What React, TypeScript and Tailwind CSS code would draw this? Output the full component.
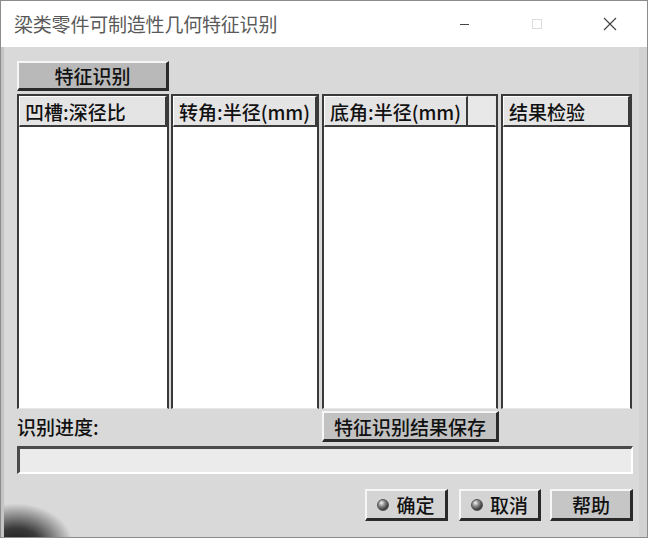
import React from 'react';

const font = { fontFamily: '"Noto Sans CJK SC", "Noto Sans", sans-serif' };

const Ball: React.FC = () => (
  <span className="inline-block w-[12px] h-[12px] rounded-full bg-[radial-gradient(circle_at_35%_30%,#f4f4f4_0%,#8a8a8a_35%,#2a2a2a_80%)] border border-[#555]" />
);

const Column: React.FC<{ title: string; width: string; extra?: boolean }> = ({ title, width, extra }) => (
  <div className={`${width} shrink-0 h-full flex flex-col bg-white border-l-2 border-t-2 border-r-2 border-[#3a3a3a] border-b border-b-[#e8e8e8]`}>
    <div className="flex h-[31px] bg-[#e4e4e4]">
      <div className="flex-1 flex items-center pl-[5px] border-t border-l border-t-white border-l-white border-r-2 border-b-2 border-[#3a3a3a] text-[19px] font-medium text-[#111] leading-none whitespace-nowrap overflow-hidden">
        {title}
      </div>
      {extra && <div className="w-[28px] border-b-2 border-r border-[#3a3a3a] border-r-[#e4e4e4] bg-[#e8e8e8]" />}
    </div>
    <div className="flex-1 bg-white" />
  </div>
);

const BevelButton: React.FC<{ children: React.ReactNode; className?: string }> = ({ children, className }) => (
  <div
    className={`flex items-center justify-center shrink-0 border-t-2 border-l-2 border-t-[#f6f6f6] border-l-[#f6f6f6] border-b-[3px] border-r-[3px] border-b-[#2a2a2a] border-r-[#2a2a2a] text-[19px] font-medium text-[#111] leading-none whitespace-nowrap ${className ?? ''}`}
  >
    {children}
  </div>
);

const App: React.FC = () => {
  return (
    <div className="w-[650px] h-[538px] bg-white overflow-hidden" style={font}>
      <div className="w-[648px] h-[538px] border border-[#8c8c8c] flex flex-col">
        {/* Title bar */}
        <div className="h-[46px] bg-white flex items-center pl-[13px] shrink-0">
          <span className="text-[19px] text-[#5a5a5a] tracking-[-0.2px]">梁类零件可制造性几何特征识别</span>
          <div className="ml-auto flex items-center h-full">
            <div className="w-[74px] flex justify-center">
              <span className="block w-[9px] h-[1px] bg-[#444]" />
            </div>
            <div className="w-[72px] flex justify-center">
              <span className="block w-[10px] h-[10px] border border-[#dcdcdc]" />
            </div>
            <div className="w-[74px] flex justify-center">
              <svg width="14" height="14" viewBox="0 0 14 14">
                <path d="M1 1 L13 13 M13 1 L1 13" stroke="#444" strokeWidth="1.2" />
              </svg>
            </div>
          </div>
        </div>

        {/* Body */}
        <div className="relative flex-1 bg-[#d9d9d9] border-l-[3px] border-l-[#c4c4c4] border-r-[8px] border-r-[#d2d2d2] pl-[13px] pr-[6px] overflow-hidden">
          <div className="absolute left-[-26px] bottom-[-24px] w-[96px] h-[58px] rounded-full bg-[radial-gradient(ellipse_at_40%_75%,#141414_0%,#3a3a3a_30%,rgba(217,217,217,0)_70%)]" />

          <div className="pt-[14px]">
            <BevelButton className="w-[152px] h-[30px] bg-[#b9b9b9]">特征识别</BevelButton>
          </div>

          <div className="flex h-[315px] mt-[3px]">
            <Column title="凹槽:深径比" width="w-[152px]" />
            <Column title="转角:半径(mm)" width="w-[148px] ml-[2px]" />
            <Column title="底角:半径(mm)" width="w-[176px] ml-[3px]" extra />
            <Column title="结果检验" width="w-[131px] ml-[3px]" />
          </div>

          <div className="flex items-start h-[35px] mt-[2px]">
            <span className="text-[19px] font-medium text-[#111] mt-[3px] w-[305px] leading-[26px]">识别进度:</span>
            <BevelButton className="w-[177px] h-[31px] bg-[#c2c2c2] border-t-[#e8e8e8] border-l-[#e8e8e8]">特征识别结果保存</BevelButton>
          </div>

          <div className="h-[28px] w-[616px] bg-[#ebebeb] border-t-[3px] border-l-[3px] border-[#4a4a4a] border-b-2 border-r-2 border-b-white border-r-white" />

          <div className="flex justify-end mt-[15px]">
            <BevelButton className="w-[83px] h-[32px] bg-[#d4d4d4] gap-[7px]">
              <Ball />
              <span>确定</span>
            </BevelButton>
            <BevelButton className="w-[82px] h-[32px] bg-[#d4d4d4] gap-[7px] ml-[11px]">
              <Ball />
              <span>取消</span>
            </BevelButton>
            <BevelButton className="w-[83px] h-[32px] bg-[#c6c6c6] ml-[9px]">帮助</BevelButton>
          </div>
        </div>
      </div>
    </div>
  );
};

export default App;
